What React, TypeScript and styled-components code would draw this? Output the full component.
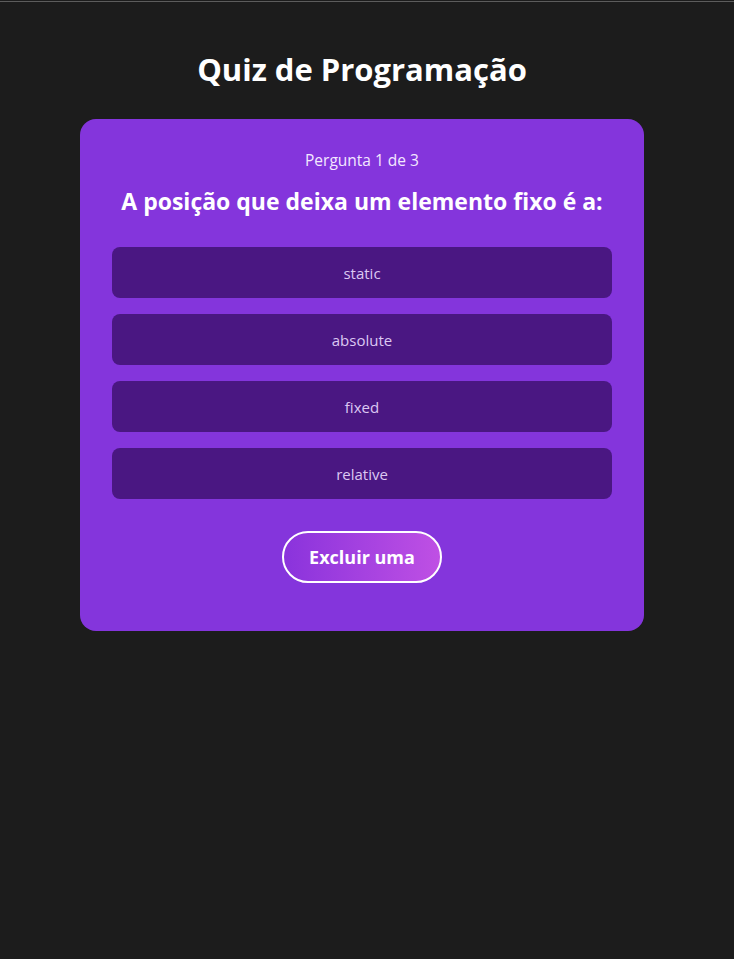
import React from "react";
import styled, { createGlobalStyle } from "styled-components";

const Global = createGlobalStyle`
  html, body { margin: 0; padding: 0; background: #1c1c1c; }
  body { font-family: "Open Sans", Lato, sans-serif; color: #fff; }
  * { box-sizing: border-box; }
`;

const TopRule = styled.div`
  height: 1px;
  margin-top: 1px;
  background: #5c5c5c;
`;

const Page = styled.main`
  display: flex;
  flex-direction: column;
  align-items: center;
  padding: 47px 10px 0 0;
`;

const Title = styled.h1`
  margin: 0 0 30px;
  font-size: 31px;
  line-height: 40px;
  font-weight: 700;
  color: #fff;
`;

const Card = styled.section`
  width: 564px;
  background: #8435dc;
  border-radius: 16px;
  padding: 30px 32px 48px;
  display: flex;
  flex-direction: column;
  align-items: center;
`;

const Counter = styled.p`
  margin: 0;
  font-size: 15.5px;
  line-height: 22px;
  color: #f3e8ff;
`;

const Question = styled.h2`
  margin: 15px 0 31px;
  font-size: 23px;
  line-height: 30px;
  font-weight: 700;
  color: #fff;
`;

const Options = styled.div`
  width: 100%;
  display: flex;
  flex-direction: column;
  gap: 16px;
`;

const Option = styled.button`
  height: 51px;
  width: 100%;
  border: none;
  border-radius: 8px;
  background: #4a1782;
  color: #dcc8f2;
  font-family: inherit;
  font-size: 15px;
  cursor: pointer;
`;

const Exclude = styled.button`
  margin-top: 32px;
  width: 160px;
  height: 52px;
  border: 2px solid #fff;
  border-radius: 26px;
  background: linear-gradient(90deg, #8a33dc 0%, #bf50e4 100%);
  color: #fff;
  font-family: inherit;
  font-size: 18px;
  font-weight: 700;
  cursor: pointer;
`;

const options = ["static", "absolute", "fixed", "relative"];

export default function App() {
  return (
    <>
      <Global />
      <TopRule />
      <Page>
        <Title>Quiz de Programação</Title>
        <Card>
          <Counter>Pergunta 1 de 3</Counter>
          <Question>A posição que deixa um elemento fixo é a:</Question>
          <Options>
            {options.map((o) => (
              <Option key={o}>{o}</Option>
            ))}
          </Options>
          <Exclude>Excluir uma</Exclude>
        </Card>
      </Page>
    </>
  );
}
